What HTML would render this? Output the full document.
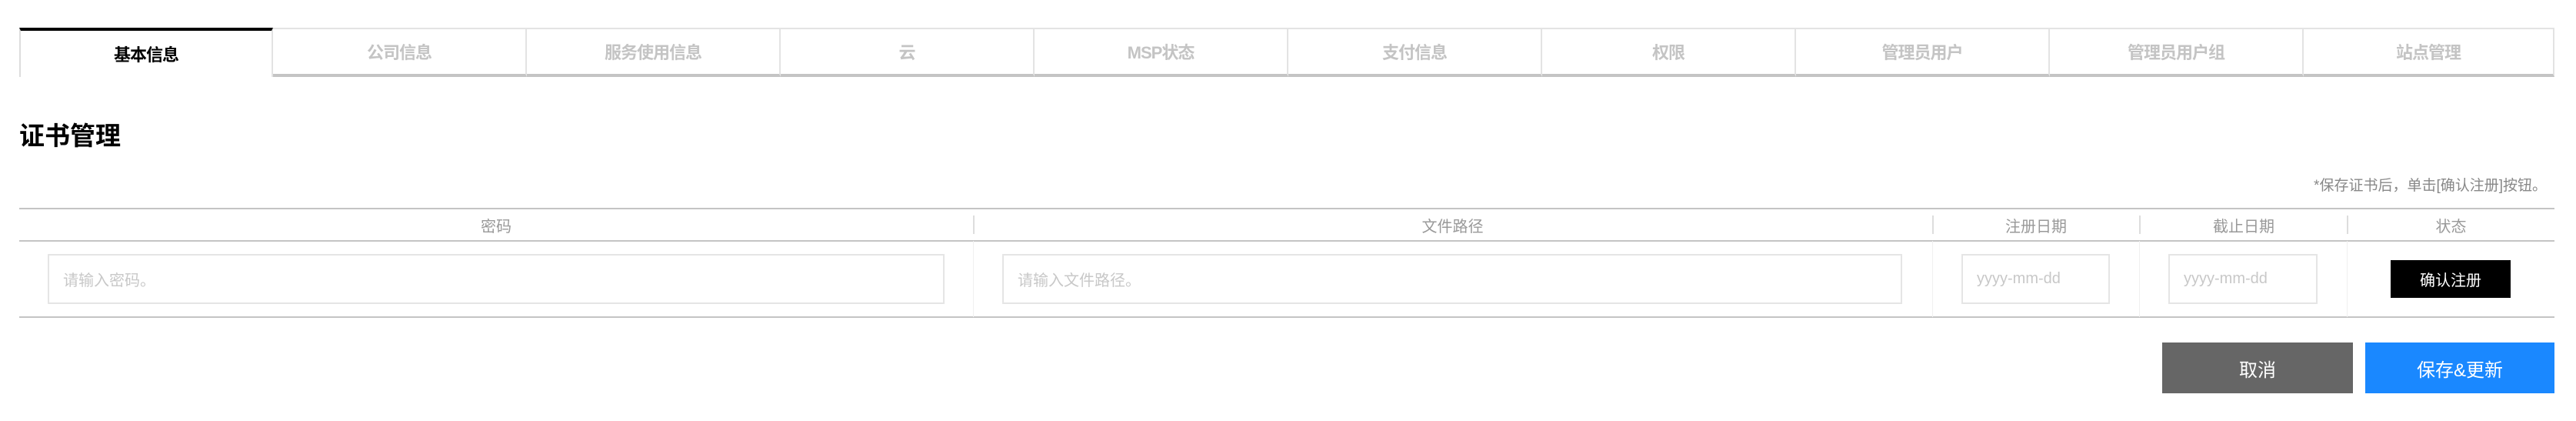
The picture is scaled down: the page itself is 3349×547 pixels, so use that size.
<!DOCTYPE html>
<html><head><meta charset="utf-8"><style>
*{margin:0;padding:0;box-sizing:border-box}
body{width:3349px;height:547px;background:#fff;position:relative;overflow:hidden;font-family:"Liberation Sans","Noto Sans CJK SC",sans-serif}
.a{position:absolute}
.tab{position:absolute;top:36px;height:64px;border:2px solid #e3e3e3;border-bottom:4px solid #c4c4c4;border-left:none;color:#c4c4c4;font-weight:bold;font-size:22px;display:flex;align-items:center;justify-content:center;letter-spacing:-1px}
.tab.act{border-top:4px solid #000;border-left:2px solid #ddd;border-bottom:none;color:#000}
.inp{position:absolute;top:330px;height:65px;border:2px solid #e5e5e5;color:#c8c8c8;font-size:20px;padding-left:18px;display:flex;align-items:center}
.th{position:absolute;top:271px;height:42px;display:flex;align-items:center;justify-content:center;color:#999;font-size:20px}
.vs{position:absolute;top:280px;height:24px;width:2px;background:#ddd}
.vb{position:absolute;top:313px;height:99px;width:1px;background:#f0f0f0}
</style></head><body>
<div class="tab act" style="left:25px;width:330px">基本信息</div>
<div class="tab" style="left:355px;width:330px">公司信息</div>
<div class="tab" style="left:685px;width:330px">服务使用信息</div>
<div class="tab" style="left:1015px;width:330px">云</div>
<div class="tab" style="left:1345px;width:330px">MSP状态</div>
<div class="tab" style="left:1675px;width:330px">支付信息</div>
<div class="tab" style="left:2005px;width:330px">权限</div>
<div class="tab" style="left:2335px;width:330px">管理员用户</div>
<div class="tab" style="left:2665px;width:330px">管理员用户组</div>
<div class="tab" style="left:2995px;width:326px;border-right:2px solid #e3e3e3">站点管理</div>

<div class="a" style="left:25px;top:150px;font-size:33px;font-weight:bold;color:#000">证书管理</div>
<div class="a" style="right:38px;top:226px;font-size:19px;color:#888">*保存证书后，单击[确认注册]按钮。</div>

<div class="a" style="left:25px;top:270px;width:3296px;height:2px;background:#c4c4c4"></div>
<div class="a" style="left:25px;top:312px;width:3296px;height:2px;background:#c4c4c4"></div>
<div class="a" style="left:25px;top:411px;width:3296px;height:2px;background:#c4c4c4"></div>

<div class="th" style="left:25px;width:1240px">密码</div>
<div class="th" style="left:1265px;width:1247px">文件路径</div>
<div class="th" style="left:2512px;width:270px">注册日期</div>
<div class="th" style="left:2782px;width:270px">截止日期</div>
<div class="th" style="left:3052px;width:269px">状态</div>
<div class="vs" style="left:1265px"></div><div class="vs" style="left:2512px"></div><div class="vs" style="left:2781px"></div><div class="vs" style="left:3051px"></div>
<div class="vb" style="left:1265px"></div><div class="vb" style="left:2512px"></div><div class="vb" style="left:2781px"></div><div class="vb" style="left:3051px"></div>

<div class="inp" style="left:62px;width:1166px">请输入密码。</div>
<div class="inp" style="left:1303px;width:1170px">请输入文件路径。</div>
<div class="inp" style="left:2550px;width:193px;font-family:'Liberation Sans',sans-serif">yyyy-mm-dd</div>
<div class="inp" style="left:2819px;width:194px;font-family:'Liberation Sans',sans-serif">yyyy-mm-dd</div>
<div class="a" style="left:3108px;top:338px;width:156px;height:49px;background:#000;color:#fff;font-size:20px;display:flex;align-items:center;justify-content:center">确认注册</div>

<div class="a" style="left:2811px;top:445px;width:248px;height:66px;background:#666;color:#fff;font-size:24px;display:flex;align-items:center;justify-content:center">取消</div>
<div class="a" style="left:3075px;top:445px;width:246px;height:66px;background:#1a88ff;color:#fff;font-size:24px;display:flex;align-items:center;justify-content:center">保存&amp;更新</div>
</body></html>
